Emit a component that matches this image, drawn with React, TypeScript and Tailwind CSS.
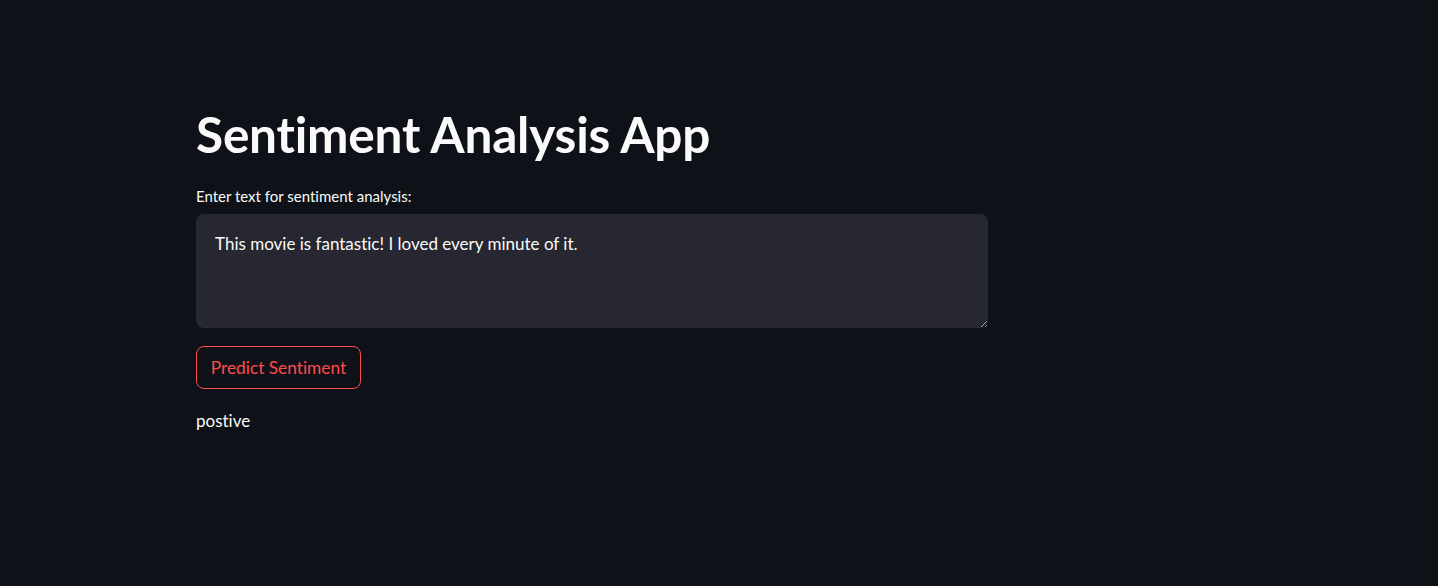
import { useState } from 'react';

const App = () => {
  const [text, setText] = useState('This movie is fantastic! I loved every minute of it.');

  return (
    <div className="min-h-[586px] w-full bg-[#0e1117] text-[#fafafa] font-['Lato','Liberation_Sans',sans-serif] [font-variant-ligatures:none]">
      <main className="w-[792px] ml-[196px] pt-[105px] flex flex-col">
        <h1 className="text-[49.5px] leading-[59px] font-bold tracking-[-0.2px]">Sentiment Analysis App</h1>

        <label className="mt-[22px] text-[15px] leading-[20px]">Enter text for sentiment analysis:</label>
        <textarea
          value={text}
          onChange={(e) => setText(e.target.value)}
          className="mt-[8px] h-[114px] w-full rounded-lg bg-[#262730] px-[19px] py-[19px] text-[17px] leading-[22px] text-[#fafafa] outline-none resize-y [font-variant-ligatures:none]"
        />

        <div className="mt-[18px]">
          <button className="h-[43px] w-[165px] rounded-lg border border-[#ff4b4b] bg-transparent text-[17.3px] text-[#ff4b4b]">
            Predict Sentiment
          </button>
        </div>

        {/* result */}
        <p className="mt-[20px] text-[17px] leading-[24px]">postive</p>
      </main>
    </div>
  );
};

export default App;
